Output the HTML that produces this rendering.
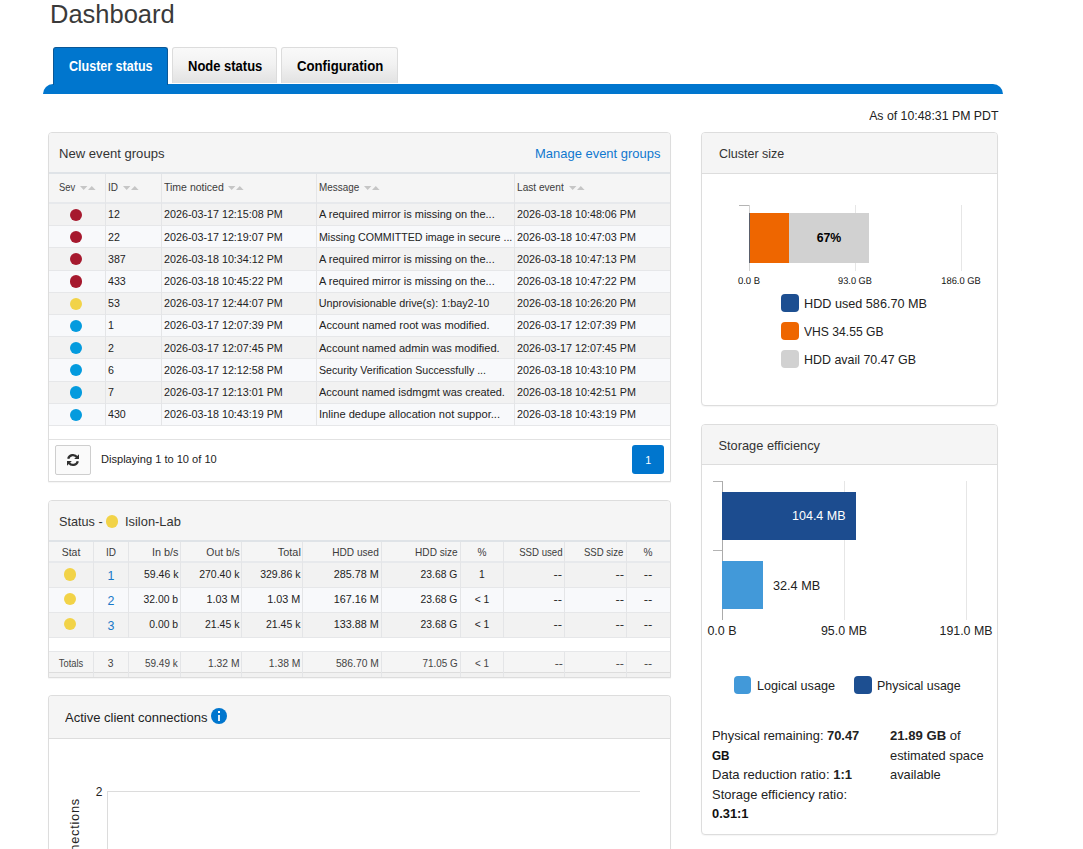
<!DOCTYPE html>
<html><head><meta charset="utf-8"><title>Dashboard</title>
<style>
html,body{margin:0;padding:0;background:#fff}
body{width:1083px;height:849px;overflow:hidden;position:relative;font-family:"Liberation Sans",sans-serif;color:#222}
.t{position:absolute;white-space:nowrap;line-height:1;display:block}
</style></head><body>
<div style="position:absolute;left:43px;top:84px;width:960.00px;height:10.00px;background:#0076ce;border-radius:10px 10px 0 0;"></div>
<div style="position:absolute;left:53px;top:47px;width:115.00px;height:37.50px;background:#0076ce;border-radius:3px 3px 0 0;box-sizing:border-box;border:1px solid #0a5796;border-bottom:none;"></div>
<div style="position:absolute;left:172px;top:47px;width:105px;height:35.7px;box-sizing:border-box;border:1px solid #dcdcdc;border-bottom:none;border-radius:3px 3px 0 0;background:linear-gradient(#f9f9f9,#f2f2f2 45%,#e2e2e2)"></div>
<div style="position:absolute;left:281px;top:47px;width:117px;height:35.7px;box-sizing:border-box;border:1px solid #dcdcdc;border-bottom:none;border-radius:3px 3px 0 0;background:linear-gradient(#f9f9f9,#f2f2f2 45%,#e2e2e2)"></div>
<div style="position:absolute;left:48px;top:132px;width:623px;height:350px;box-sizing:border-box;border:1px solid #dddddd;border-radius:4px 4px 0 0;background:#fff;overflow:hidden;box-shadow:0 1px 1px rgba(0,0,0,0.04)"><div style="height:41px;background:#f5f5f5;border-bottom:1px solid #dfe3e7"></div></div>
<div style="position:absolute;left:49px;top:172px;width:621.00px;height:2.00px;background:#dfe3e7;"></div>
<div style="position:absolute;left:49px;top:174px;width:621.00px;height:28.50px;background:#f5f5f5;"></div>
<div style="position:absolute;left:49px;top:202px;width:621.00px;height:2.00px;background:#e7e9ec;"></div>
<svg style="position:absolute;left:80.1px;top:186.0px" width="17" height="5" viewBox="0 0 17 5"><path d="M0 0 L7.4 0 L3.7 4 Z M8 4 L15.6 4 L11.8 0 Z" fill="#c6c6c6"/></svg>
<svg style="position:absolute;left:123.0px;top:186.0px" width="17" height="5" viewBox="0 0 17 5"><path d="M0 0 L7.4 0 L3.7 4 Z M8 4 L15.6 4 L11.8 0 Z" fill="#c6c6c6"/></svg>
<svg style="position:absolute;left:228.0px;top:186.0px" width="17" height="5" viewBox="0 0 17 5"><path d="M0 0 L7.4 0 L3.7 4 Z M8 4 L15.6 4 L11.8 0 Z" fill="#c6c6c6"/></svg>
<svg style="position:absolute;left:364.0px;top:186.0px" width="17" height="5" viewBox="0 0 17 5"><path d="M0 0 L7.4 0 L3.7 4 Z M8 4 L15.6 4 L11.8 0 Z" fill="#c6c6c6"/></svg>
<svg style="position:absolute;left:568.7px;top:186.0px" width="17" height="5" viewBox="0 0 17 5"><path d="M0 0 L7.4 0 L3.7 4 Z M8 4 L15.6 4 L11.8 0 Z" fill="#c6c6c6"/></svg>
<div style="position:absolute;left:49px;top:204px;width:621.00px;height:222.00px;background:#e6e7e9;"></div>
<div style="position:absolute;left:49px;top:204px;width:621.00px;height:21.00px;background:#f2f2f2;"></div>
<div style="position:absolute;left:69.9px;top:208.8px;width:12.20px;height:12.20px;background:#a6192e;border-radius:50%;"></div>
<div style="position:absolute;left:49px;top:226px;width:621.00px;height:21.00px;background:#f8f9fb;"></div>
<div style="position:absolute;left:69.9px;top:231.0px;width:12.20px;height:12.20px;background:#a6192e;border-radius:50%;"></div>
<div style="position:absolute;left:49px;top:248px;width:621.00px;height:22.00px;background:#f2f2f2;"></div>
<div style="position:absolute;left:69.9px;top:253.20000000000002px;width:12.20px;height:12.20px;background:#a6192e;border-radius:50%;"></div>
<div style="position:absolute;left:49px;top:271px;width:621.00px;height:21.00px;background:#f8f9fb;"></div>
<div style="position:absolute;left:69.9px;top:275.4px;width:12.20px;height:12.20px;background:#a6192e;border-radius:50%;"></div>
<div style="position:absolute;left:49px;top:293px;width:621.00px;height:21.00px;background:#f2f2f2;"></div>
<div style="position:absolute;left:69.9px;top:297.6px;width:12.20px;height:12.20px;background:#f2d348;border-radius:50%;"></div>
<div style="position:absolute;left:49px;top:315px;width:621.00px;height:21.00px;background:#f8f9fb;"></div>
<div style="position:absolute;left:69.9px;top:319.8px;width:12.20px;height:12.20px;background:#049bde;border-radius:50%;"></div>
<div style="position:absolute;left:49px;top:337px;width:621.00px;height:21.00px;background:#f2f2f2;"></div>
<div style="position:absolute;left:69.9px;top:342.0px;width:12.20px;height:12.20px;background:#049bde;border-radius:50%;"></div>
<div style="position:absolute;left:49px;top:359px;width:621.00px;height:22.00px;background:#f8f9fb;"></div>
<div style="position:absolute;left:69.9px;top:364.20000000000005px;width:12.20px;height:12.20px;background:#049bde;border-radius:50%;"></div>
<div style="position:absolute;left:49px;top:382px;width:621.00px;height:21.00px;background:#f2f2f2;"></div>
<div style="position:absolute;left:69.9px;top:386.4px;width:12.20px;height:12.20px;background:#049bde;border-radius:50%;"></div>
<div style="position:absolute;left:49px;top:404px;width:621.00px;height:21.00px;background:#f8f9fb;"></div>
<div style="position:absolute;left:69.9px;top:408.6px;width:12.20px;height:12.20px;background:#049bde;border-radius:50%;"></div>
<div style="position:absolute;left:105px;top:174px;width:1.00px;height:252.00px;background:#e4e5e7;"></div>
<div style="position:absolute;left:161px;top:174px;width:1.00px;height:252.00px;background:#e4e5e7;"></div>
<div style="position:absolute;left:316px;top:174px;width:1.00px;height:252.00px;background:#e4e5e7;"></div>
<div style="position:absolute;left:514px;top:174px;width:1.00px;height:252.00px;background:#e4e5e7;"></div>
<div style="position:absolute;left:49px;top:439px;width:621.00px;height:1.00px;background:#e2e2e2;"></div>
<div style="position:absolute;left:55px;top:445px;width:36px;height:30px;box-sizing:border-box;border:1px solid #cecece;border-radius:2px;background:#fafafa"></div>
<svg style="position:absolute;left:66px;top:452.8px" width="14" height="14" viewBox="0 0 14 14"><g fill="none" stroke="#303030" stroke-width="2.25"><path d="M2.2 5.8 A4.95 4.95 0 0 1 11.05 4.16"/><path d="M11.8 8.2 A4.95 4.95 0 0 1 2.95 9.84"/></g><path d="M13 1.3 L13 6.1 L8.2 6.1 Z" fill="#303030"/><path d="M1 12.7 L1 7.9 L5.8 7.9 Z" fill="#303030"/></svg>
<div style="position:absolute;left:632px;top:445px;width:32.00px;height:29.00px;background:#0076ce;border-radius:3px;"></div>
<div style="position:absolute;left:48px;top:500px;width:623px;height:178px;box-sizing:border-box;border:1px solid #dddddd;border-radius:4px 4px 0 0;background:#fff;overflow:hidden;box-shadow:0 1px 1px rgba(0,0,0,0.04)"><div style="height:41px;background:#f5f5f5;border-bottom:1px solid #dfe3e7"></div></div>
<div style="position:absolute;left:49px;top:540px;width:621.00px;height:2.00px;background:#dfe3e7;"></div>
<div style="position:absolute;left:106.0px;top:515.1999999999999px;width:12.40px;height:12.40px;background:#f2d348;border-radius:50%;"></div>
<div style="position:absolute;left:49px;top:542px;width:621.00px;height:19.00px;background:#f5f5f5;"></div>
<div style="position:absolute;left:49px;top:561px;width:621.00px;height:2.00px;background:#e7e9ec;"></div>
<div style="position:absolute;left:49px;top:563px;width:621.00px;height:75.00px;background:#e6e7e9;"></div>
<div style="position:absolute;left:49px;top:563px;width:621.00px;height:24.00px;background:#f2f2f2;"></div>
<div style="position:absolute;left:63.9px;top:568.4px;width:12.20px;height:12.20px;background:#f2d348;border-radius:50%;"></div>
<div style="position:absolute;left:49px;top:588px;width:621.00px;height:24.00px;background:#f8f9fb;"></div>
<div style="position:absolute;left:63.9px;top:593.1999999999999px;width:12.20px;height:12.20px;background:#f2d348;border-radius:50%;"></div>
<div style="position:absolute;left:49px;top:613px;width:621.00px;height:24.00px;background:#f2f2f2;"></div>
<div style="position:absolute;left:63.9px;top:618.0px;width:12.20px;height:12.20px;background:#f2d348;border-radius:50%;"></div>
<div style="position:absolute;left:49px;top:652px;width:621.00px;height:20.00px;background:#f5f5f5;"></div>
<div style="position:absolute;left:49px;top:651px;width:621.00px;height:1.00px;background:#e6e7e9;"></div>
<div style="position:absolute;left:49px;top:672px;width:621.00px;height:1.00px;background:#dddddd;"></div>
<div style="position:absolute;left:49px;top:673px;width:621.00px;height:4.00px;background:#f1f1f1;"></div>
<div style="position:absolute;left:93px;top:542px;width:1.00px;height:96.00px;background:#e4e5e7;"></div>
<div style="position:absolute;left:93px;top:651.5px;width:1.00px;height:25.50px;background:#e4e5e7;"></div>
<div style="position:absolute;left:128px;top:542px;width:1.00px;height:96.00px;background:#e4e5e7;"></div>
<div style="position:absolute;left:128px;top:651.5px;width:1.00px;height:25.50px;background:#e4e5e7;"></div>
<div style="position:absolute;left:180px;top:542px;width:1.00px;height:96.00px;background:#e4e5e7;"></div>
<div style="position:absolute;left:180px;top:651.5px;width:1.00px;height:25.50px;background:#e4e5e7;"></div>
<div style="position:absolute;left:241px;top:542px;width:1.00px;height:96.00px;background:#e4e5e7;"></div>
<div style="position:absolute;left:241px;top:651.5px;width:1.00px;height:25.50px;background:#e4e5e7;"></div>
<div style="position:absolute;left:302px;top:542px;width:1.00px;height:96.00px;background:#e4e5e7;"></div>
<div style="position:absolute;left:302px;top:651.5px;width:1.00px;height:25.50px;background:#e4e5e7;"></div>
<div style="position:absolute;left:381px;top:542px;width:1.00px;height:96.00px;background:#e4e5e7;"></div>
<div style="position:absolute;left:381px;top:651.5px;width:1.00px;height:25.50px;background:#e4e5e7;"></div>
<div style="position:absolute;left:460px;top:542px;width:1.00px;height:96.00px;background:#e4e5e7;"></div>
<div style="position:absolute;left:460px;top:651.5px;width:1.00px;height:25.50px;background:#e4e5e7;"></div>
<div style="position:absolute;left:503px;top:542px;width:1.00px;height:96.00px;background:#e4e5e7;"></div>
<div style="position:absolute;left:503px;top:651.5px;width:1.00px;height:25.50px;background:#e4e5e7;"></div>
<div style="position:absolute;left:564px;top:542px;width:1.00px;height:96.00px;background:#e4e5e7;"></div>
<div style="position:absolute;left:564px;top:651.5px;width:1.00px;height:25.50px;background:#e4e5e7;"></div>
<div style="position:absolute;left:626px;top:542px;width:1.00px;height:96.00px;background:#e4e5e7;"></div>
<div style="position:absolute;left:626px;top:651.5px;width:1.00px;height:25.50px;background:#e4e5e7;"></div>
<div style="position:absolute;left:48px;top:695px;width:623px;height:165px;box-sizing:border-box;border:1px solid #dddddd;border-bottom:none;border-radius:4px 4px 0 0;background:#fff;overflow:hidden;box-shadow:0 1px 1px rgba(0,0,0,0.04)"><div style="height:42.39999999999998px;background:#f5f5f5;border-bottom:1px solid #dddddd"></div></div>
<div style="position:absolute;left:210.9px;top:707.75px;width:16.20px;height:16.20px;background:#0076ce;border-radius:50%;"></div>
<div style="position:absolute;left:218.0px;top:714.7px;width:2.00px;height:6.30px;background:rgba(255,255,255,0.88);"></div>
<div style="position:absolute;left:217.9px;top:710.9px;width:2.10px;height:2.10px;background:#ffffff;"></div>
<div style="position:absolute;left:107px;top:791px;width:533.00px;height:1.00px;background:#dcdcdc;"></div>
<div style="position:absolute;left:107px;top:791px;width:1.00px;height:58.00px;background:#dcdcdc;"></div>
<span style="position:absolute;right:1013.4px;top:798px;white-space:nowrap;font-size:12.8px;line-height:1;color:#222;transform-origin:100% 0;transform:rotate(-90deg);display:block;letter-spacing:0.75px">Active connections</span>
<div style="position:absolute;left:701px;top:132px;width:297px;height:274px;box-sizing:border-box;border:1px solid #dddddd;border-radius:4px;background:#fff;overflow:hidden;box-shadow:0 1px 1px rgba(0,0,0,0.04)"><div style="height:39.599999999999994px;background:#f5f5f5;border-bottom:1px solid #dddddd"></div></div>
<div style="position:absolute;left:855px;top:205px;width:1.00px;height:66.00px;background:#e6e6e6;"></div>
<div style="position:absolute;left:961px;top:205px;width:1.00px;height:66.00px;background:#e6e6e6;"></div>
<div style="position:absolute;left:739.3px;top:204.5px;width:10.20px;height:1.00px;background:#b4b4b4;"></div>
<div style="position:absolute;left:748.8px;top:205px;width:1.00px;height:66.00px;background:#d2d2d2;"></div>
<div style="position:absolute;left:748.8px;top:213.3px;width:1.00px;height:49.50px;background:#5a5f6b;"></div>
<div style="position:absolute;left:749.6px;top:213.3px;width:39.40px;height:49.50px;background:#ee6600;"></div>
<div style="position:absolute;left:789px;top:213.3px;width:80.20px;height:49.50px;background:#d1d1d1;"></div>
<div style="position:absolute;left:781.0px;top:294px;width:18.40px;height:18.20px;background:#1d4f91;border-radius:4px;"></div>
<div style="position:absolute;left:781.0px;top:322px;width:18.40px;height:18.20px;background:#ee6600;border-radius:4px;"></div>
<div style="position:absolute;left:781.0px;top:350px;width:18.40px;height:18.20px;background:#d1d1d1;border-radius:4px;"></div>
<div style="position:absolute;left:701px;top:424px;width:297px;height:411px;box-sizing:border-box;border:1px solid #dddddd;border-radius:4px;background:#fff;overflow:hidden;box-shadow:0 1px 1px rgba(0,0,0,0.04)"><div style="height:39px;background:#f5f5f5;border-bottom:1px solid #dddddd"></div></div>
<div style="position:absolute;left:844px;top:481px;width:1.00px;height:139.00px;background:#e6e6e6;"></div>
<div style="position:absolute;left:966px;top:481px;width:1.00px;height:139.00px;background:#e6e6e6;"></div>
<div style="position:absolute;left:712.6px;top:480.5px;width:9.90px;height:1.00px;background:#b4b4b4;"></div>
<div style="position:absolute;left:712.6px;top:549.5px;width:9.90px;height:1.00px;background:#b4b4b4;"></div>
<div style="position:absolute;left:722px;top:481px;width:1.00px;height:139.00px;background:#ababab;"></div>
<div style="position:absolute;left:722px;top:491.6px;width:133.80px;height:48.20px;background:#1c4c8f;"></div>
<div style="position:absolute;left:722px;top:561px;width:41.30px;height:48.20px;background:#4299d9;"></div>
<div style="position:absolute;left:733.5px;top:676.2px;width:17.70px;height:17.60px;background:#4299d9;border-radius:4px;"></div>
<div style="position:absolute;left:854.2px;top:676.2px;width:17.80px;height:17.60px;background:#1d4f91;border-radius:4px;"></div>
<span class="t" style="top:1.20px;font-size:26.2px;color:#3a3a3a;left:50.00px;transform-origin:0 0;transform:scaleX(0.9733);">Dashboard</span>
<span class="t" style="top:60.10px;font-size:13.9px;color:#ffffff;font-weight:700;left:69.00px;transform-origin:0 0;transform:scaleX(0.9013);">Cluster status</span>
<span class="t" style="top:60.10px;font-size:13.9px;color:#000000;font-weight:700;left:187.50px;transform-origin:0 0;transform:scaleX(0.9346);">Node status</span>
<span class="t" style="top:60.10px;font-size:13.9px;color:#000000;font-weight:700;left:296.50px;transform-origin:0 0;transform:scaleX(0.9479);">Configuration</span>
<span class="t" style="top:110.00px;font-size:12.8px;color:#222222;right:84.70px;transform-origin:100% 0;transform:scaleX(0.9618);">As of 10:48:31 PM PDT</span>
<span class="t" style="top:148.00px;font-size:12.8px;color:#333333;left:59.00px;transform-origin:0 0;transform:scaleX(1.0227);">New event groups</span>
<span class="t" style="top:148.00px;font-size:12.8px;color:#0f78cf;left:534.50px;transform-origin:0 0;transform:scaleX(1.0129);">Manage event groups</span>
<span class="t" style="top:181.80px;font-size:10.8px;color:#3c3c3c;left:59.00px;transform-origin:0 0;transform:scaleX(0.8705);">Sev</span>
<span class="t" style="top:181.80px;font-size:10.8px;color:#3c3c3c;left:107.50px;transform-origin:0 0;transform:scaleX(0.9249);">ID</span>
<span class="t" style="top:181.80px;font-size:10.8px;color:#3c3c3c;left:163.50px;transform-origin:0 0;transform:scaleX(0.9736);">Time noticed</span>
<span class="t" style="top:181.80px;font-size:10.8px;color:#3c3c3c;left:318.80px;transform-origin:0 0;transform:scaleX(0.9175);">Message</span>
<span class="t" style="top:181.80px;font-size:10.8px;color:#3c3c3c;left:517.00px;transform-origin:0 0;transform:scaleX(0.9372);">Last event</span>
<span class="t" style="top:209.00px;font-size:10.8px;color:#222222;left:108.00px;transform-origin:0 0;transform:scaleX(0.9850);">12</span>
<span class="t" style="top:209.00px;font-size:10.8px;color:#222222;left:163.50px;transform-origin:0 0;transform:scaleX(0.9945);">2026-03-17 12:15:08 PM</span>
<span class="t" style="top:209.00px;font-size:10.8px;color:#222222;left:318.80px;transform-origin:0 0;transform:scaleX(1.0166);">A required mirror is missing on the...</span>
<span class="t" style="top:209.00px;font-size:10.8px;color:#222222;left:517.00px;transform-origin:0 0;transform:scaleX(0.9954);">2026-03-18 10:48:06 PM</span>
<span class="t" style="top:232.00px;font-size:10.8px;color:#222222;left:108.00px;transform-origin:0 0;transform:scaleX(0.9850);">22</span>
<span class="t" style="top:232.00px;font-size:10.8px;color:#222222;left:163.50px;transform-origin:0 0;transform:scaleX(0.9945);">2026-03-17 12:19:07 PM</span>
<span class="t" style="top:232.00px;font-size:10.8px;color:#222222;left:318.80px;transform-origin:0 0;transform:scaleX(0.9853);">Missing COMMITTED image in secure ...</span>
<span class="t" style="top:232.00px;font-size:10.8px;color:#222222;left:517.00px;transform-origin:0 0;transform:scaleX(0.9954);">2026-03-18 10:47:03 PM</span>
<span class="t" style="top:254.00px;font-size:10.8px;color:#222222;left:108.00px;transform-origin:0 0;transform:scaleX(0.9850);">387</span>
<span class="t" style="top:254.00px;font-size:10.8px;color:#222222;left:163.50px;transform-origin:0 0;transform:scaleX(0.9945);">2026-03-18 10:34:12 PM</span>
<span class="t" style="top:254.00px;font-size:10.8px;color:#222222;left:318.80px;transform-origin:0 0;transform:scaleX(1.0166);">A required mirror is missing on the...</span>
<span class="t" style="top:254.00px;font-size:10.8px;color:#222222;left:517.00px;transform-origin:0 0;transform:scaleX(0.9954);">2026-03-18 10:47:13 PM</span>
<span class="t" style="top:276.00px;font-size:10.8px;color:#222222;left:108.00px;transform-origin:0 0;transform:scaleX(0.9850);">433</span>
<span class="t" style="top:276.00px;font-size:10.8px;color:#222222;left:163.50px;transform-origin:0 0;transform:scaleX(0.9945);">2026-03-18 10:45:22 PM</span>
<span class="t" style="top:276.00px;font-size:10.8px;color:#222222;left:318.80px;transform-origin:0 0;transform:scaleX(1.0166);">A required mirror is missing on the...</span>
<span class="t" style="top:276.00px;font-size:10.8px;color:#222222;left:517.00px;transform-origin:0 0;transform:scaleX(0.9954);">2026-03-18 10:47:22 PM</span>
<span class="t" style="top:298.00px;font-size:10.8px;color:#222222;left:108.00px;transform-origin:0 0;transform:scaleX(0.9850);">53</span>
<span class="t" style="top:298.00px;font-size:10.8px;color:#222222;left:163.50px;transform-origin:0 0;transform:scaleX(0.9945);">2026-03-17 12:44:07 PM</span>
<span class="t" style="top:298.00px;font-size:10.8px;color:#222222;left:318.80px;transform-origin:0 0;">Unprovisionable drive(s): 1:bay2-10</span>
<span class="t" style="top:298.00px;font-size:10.8px;color:#222222;left:517.00px;transform-origin:0 0;transform:scaleX(0.9954);">2026-03-18 10:26:20 PM</span>
<span class="t" style="top:320.00px;font-size:10.8px;color:#222222;left:108.00px;transform-origin:0 0;transform:scaleX(0.9850);">1</span>
<span class="t" style="top:320.00px;font-size:10.8px;color:#222222;left:163.50px;transform-origin:0 0;transform:scaleX(0.9945);">2026-03-17 12:07:39 PM</span>
<span class="t" style="top:320.00px;font-size:10.8px;color:#222222;left:318.80px;transform-origin:0 0;transform:scaleX(1.0293);">Account named root was modified.</span>
<span class="t" style="top:320.00px;font-size:10.8px;color:#222222;left:517.00px;transform-origin:0 0;transform:scaleX(0.9954);">2026-03-17 12:07:39 PM</span>
<span class="t" style="top:343.00px;font-size:10.8px;color:#222222;left:108.00px;transform-origin:0 0;transform:scaleX(0.9850);">2</span>
<span class="t" style="top:343.00px;font-size:10.8px;color:#222222;left:163.50px;transform-origin:0 0;transform:scaleX(0.9945);">2026-03-17 12:07:45 PM</span>
<span class="t" style="top:343.00px;font-size:10.8px;color:#222222;left:318.80px;transform-origin:0 0;transform:scaleX(1.0241);">Account named admin was modified.</span>
<span class="t" style="top:343.00px;font-size:10.8px;color:#222222;left:517.00px;transform-origin:0 0;transform:scaleX(0.9954);">2026-03-17 12:07:45 PM</span>
<span class="t" style="top:365.00px;font-size:10.8px;color:#222222;left:108.00px;transform-origin:0 0;transform:scaleX(0.9850);">6</span>
<span class="t" style="top:365.00px;font-size:10.8px;color:#222222;left:163.50px;transform-origin:0 0;transform:scaleX(0.9945);">2026-03-17 12:12:58 PM</span>
<span class="t" style="top:365.00px;font-size:10.8px;color:#222222;left:318.80px;transform-origin:0 0;transform:scaleX(0.9833);">Security Verification Successfully ...</span>
<span class="t" style="top:365.00px;font-size:10.8px;color:#222222;left:517.00px;transform-origin:0 0;transform:scaleX(0.9954);">2026-03-18 10:43:10 PM</span>
<span class="t" style="top:387.00px;font-size:10.8px;color:#222222;left:108.00px;transform-origin:0 0;transform:scaleX(0.9850);">7</span>
<span class="t" style="top:387.00px;font-size:10.8px;color:#222222;left:163.50px;transform-origin:0 0;transform:scaleX(0.9945);">2026-03-17 12:13:01 PM</span>
<span class="t" style="top:387.00px;font-size:10.8px;color:#222222;left:318.80px;transform-origin:0 0;transform:scaleX(1.0157);">Account named isdmgmt was created.</span>
<span class="t" style="top:387.00px;font-size:10.8px;color:#222222;left:517.00px;transform-origin:0 0;transform:scaleX(0.9954);">2026-03-18 10:42:51 PM</span>
<span class="t" style="top:409.00px;font-size:10.8px;color:#222222;left:108.00px;transform-origin:0 0;transform:scaleX(0.9850);">430</span>
<span class="t" style="top:409.00px;font-size:10.8px;color:#222222;left:163.50px;transform-origin:0 0;transform:scaleX(0.9945);">2026-03-18 10:43:19 PM</span>
<span class="t" style="top:409.00px;font-size:10.8px;color:#222222;left:318.80px;transform-origin:0 0;transform:scaleX(1.0290);">Inline dedupe allocation not suppor...</span>
<span class="t" style="top:409.00px;font-size:10.8px;color:#222222;left:517.00px;transform-origin:0 0;transform:scaleX(0.9954);">2026-03-18 10:43:19 PM</span>
<span class="t" style="top:453.90px;font-size:10.8px;color:#222222;left:101.00px;transform-origin:0 0;transform:scaleX(1.0253);">Displaying 1 to 10 of 10</span>
<span class="t" style="top:455.00px;font-size:10.8px;color:#ffffff;left:148.30px;width:1000px;text-align:center;transform-origin:50% 0;">1</span>
<span class="t" style="top:515.60px;font-size:12.8px;color:#333333;left:59.00px;transform-origin:0 0;transform:scaleX(0.9885);">Status -</span>
<span class="t" style="top:515.60px;font-size:12.8px;color:#333333;left:125.00px;transform-origin:0 0;transform:scaleX(1.0054);">Isilon-Lab</span>
<span class="t" style="top:546.60px;font-size:10.8px;color:#3c3c3c;left:-428.70px;width:1000px;text-align:center;transform-origin:50% 0;transform:scaleX(0.9678);">Stat</span>
<span class="t" style="top:546.60px;font-size:10.8px;color:#3c3c3c;left:-389.20px;width:1000px;text-align:center;transform-origin:50% 0;transform:scaleX(0.9249);">ID</span>
<span class="t" style="top:546.60px;font-size:10.8px;color:#3c3c3c;right:905.00px;transform-origin:100% 0;transform:scaleX(1.0030);">In b/s</span>
<span class="t" style="top:546.60px;font-size:10.8px;color:#3c3c3c;right:843.50px;transform-origin:100% 0;transform:scaleX(0.9623);">Out b/s</span>
<span class="t" style="top:546.60px;font-size:10.8px;color:#3c3c3c;right:782.70px;transform-origin:100% 0;transform:scaleX(1.0082);">Total</span>
<span class="t" style="top:546.60px;font-size:10.8px;color:#3c3c3c;right:704.20px;transform-origin:100% 0;transform:scaleX(0.9335);">HDD used</span>
<span class="t" style="top:546.60px;font-size:10.8px;color:#3c3c3c;right:625.50px;transform-origin:100% 0;transform:scaleX(0.9321);">HDD size</span>
<span class="t" style="top:546.60px;font-size:10.8px;color:#3c3c3c;left:-18.00px;width:1000px;text-align:center;transform-origin:50% 0;transform:scaleX(0.9366);">%</span>
<span class="t" style="top:546.60px;font-size:10.8px;color:#3c3c3c;right:520.50px;transform-origin:100% 0;transform:scaleX(0.8946);">SSD used</span>
<span class="t" style="top:546.60px;font-size:10.8px;color:#3c3c3c;right:459.30px;transform-origin:100% 0;transform:scaleX(0.8895);">SSD size</span>
<span class="t" style="top:546.60px;font-size:10.8px;color:#3c3c3c;left:148.00px;width:1000px;text-align:center;transform-origin:50% 0;transform:scaleX(0.9366);">%</span>
<span class="t" style="top:570.00px;font-size:12.8px;color:#1878c8;left:-389.40px;width:1000px;text-align:center;transform-origin:50% 0;transform:scaleX(0.9700);">1</span>
<span class="t" style="top:569.00px;font-size:10.8px;color:#222222;right:905.00px;transform-origin:100% 0;transform:scaleX(0.9720);">59.46 k</span>
<span class="t" style="top:569.00px;font-size:10.8px;color:#222222;right:843.50px;transform-origin:100% 0;transform:scaleX(0.9720);">270.40 k</span>
<span class="t" style="top:569.00px;font-size:10.8px;color:#222222;right:782.70px;transform-origin:100% 0;transform:scaleX(0.9720);">329.86 k</span>
<span class="t" style="top:569.00px;font-size:10.8px;color:#222222;right:704.20px;transform-origin:100% 0;">285.78 M</span>
<span class="t" style="top:569.00px;font-size:10.8px;color:#222222;right:625.50px;transform-origin:100% 0;transform:scaleX(0.9580);">23.68 G</span>
<span class="t" style="top:569.00px;font-size:10.8px;color:#222222;left:-18.00px;width:1000px;text-align:center;transform-origin:50% 0;transform:scaleX(0.9580);">1</span>
<span class="t" style="top:569.00px;font-size:10.8px;color:#222222;right:520.50px;transform-origin:100% 0;transform:scaleX(1.2000);">--</span>
<span class="t" style="top:569.00px;font-size:10.8px;color:#222222;right:459.30px;transform-origin:100% 0;transform:scaleX(1.2000);">--</span>
<span class="t" style="top:569.00px;font-size:10.8px;color:#222222;left:148.00px;width:1000px;text-align:center;transform-origin:50% 0;transform:scaleX(1.2000);">--</span>
<span class="t" style="top:595.00px;font-size:12.8px;color:#1878c8;left:-389.40px;width:1000px;text-align:center;transform-origin:50% 0;transform:scaleX(0.9700);">2</span>
<span class="t" style="top:594.00px;font-size:10.8px;color:#222222;right:905.00px;transform-origin:100% 0;transform:scaleX(0.9580);">32.00 b</span>
<span class="t" style="top:594.00px;font-size:10.8px;color:#222222;right:843.50px;transform-origin:100% 0;">1.03 M</span>
<span class="t" style="top:594.00px;font-size:10.8px;color:#222222;right:782.70px;transform-origin:100% 0;">1.03 M</span>
<span class="t" style="top:594.00px;font-size:10.8px;color:#222222;right:704.20px;transform-origin:100% 0;">167.16 M</span>
<span class="t" style="top:594.00px;font-size:10.8px;color:#222222;right:625.50px;transform-origin:100% 0;transform:scaleX(0.9580);">23.68 G</span>
<span class="t" style="top:594.00px;font-size:10.8px;color:#222222;left:-18.00px;width:1000px;text-align:center;transform-origin:50% 0;transform:scaleX(0.9580);">&lt; 1</span>
<span class="t" style="top:594.00px;font-size:10.8px;color:#222222;right:520.50px;transform-origin:100% 0;transform:scaleX(1.2000);">--</span>
<span class="t" style="top:594.00px;font-size:10.8px;color:#222222;right:459.30px;transform-origin:100% 0;transform:scaleX(1.2000);">--</span>
<span class="t" style="top:594.00px;font-size:10.8px;color:#222222;left:148.00px;width:1000px;text-align:center;transform-origin:50% 0;transform:scaleX(1.2000);">--</span>
<span class="t" style="top:620.00px;font-size:12.8px;color:#1878c8;left:-389.40px;width:1000px;text-align:center;transform-origin:50% 0;transform:scaleX(0.9700);">3</span>
<span class="t" style="top:619.00px;font-size:10.8px;color:#222222;right:905.00px;transform-origin:100% 0;transform:scaleX(0.9580);">0.00 b</span>
<span class="t" style="top:619.00px;font-size:10.8px;color:#222222;right:843.50px;transform-origin:100% 0;transform:scaleX(0.9720);">21.45 k</span>
<span class="t" style="top:619.00px;font-size:10.8px;color:#222222;right:782.70px;transform-origin:100% 0;transform:scaleX(0.9720);">21.45 k</span>
<span class="t" style="top:619.00px;font-size:10.8px;color:#222222;right:704.20px;transform-origin:100% 0;">133.88 M</span>
<span class="t" style="top:619.00px;font-size:10.8px;color:#222222;right:625.50px;transform-origin:100% 0;transform:scaleX(0.9580);">23.68 G</span>
<span class="t" style="top:619.00px;font-size:10.8px;color:#222222;left:-18.00px;width:1000px;text-align:center;transform-origin:50% 0;transform:scaleX(0.9580);">&lt; 1</span>
<span class="t" style="top:619.00px;font-size:10.8px;color:#222222;right:520.50px;transform-origin:100% 0;transform:scaleX(1.2000);">--</span>
<span class="t" style="top:619.00px;font-size:10.8px;color:#222222;right:459.30px;transform-origin:100% 0;transform:scaleX(1.2000);">--</span>
<span class="t" style="top:619.00px;font-size:10.8px;color:#222222;left:148.00px;width:1000px;text-align:center;transform-origin:50% 0;transform:scaleX(1.2000);">--</span>
<span class="t" style="top:659.00px;font-size:10.3px;color:#444444;left:-428.70px;width:1000px;text-align:center;transform-origin:50% 0;transform:scaleX(0.9106);">Totals</span>
<span class="t" style="top:659.00px;font-size:10.3px;color:#444444;left:-389.40px;width:1000px;text-align:center;transform-origin:50% 0;">3</span>
<span class="t" style="top:659.00px;font-size:10.3px;color:#444444;right:905.00px;transform-origin:100% 0;transform:scaleX(0.9720);">59.49 k</span>
<span class="t" style="top:659.00px;font-size:10.3px;color:#444444;right:843.50px;transform-origin:100% 0;">1.32 M</span>
<span class="t" style="top:659.00px;font-size:10.3px;color:#444444;right:782.70px;transform-origin:100% 0;">1.38 M</span>
<span class="t" style="top:659.00px;font-size:10.3px;color:#444444;right:704.20px;transform-origin:100% 0;">586.70 M</span>
<span class="t" style="top:659.00px;font-size:10.3px;color:#444444;right:625.50px;transform-origin:100% 0;transform:scaleX(0.9580);">71.05 G</span>
<span class="t" style="top:659.00px;font-size:10.3px;color:#444444;left:-18.00px;width:1000px;text-align:center;transform-origin:50% 0;transform:scaleX(0.9580);">&lt; 1</span>
<span class="t" style="top:659.00px;font-size:10.3px;color:#444444;right:520.50px;transform-origin:100% 0;transform:scaleX(1.2000);">--</span>
<span class="t" style="top:659.00px;font-size:10.3px;color:#444444;right:459.30px;transform-origin:100% 0;transform:scaleX(1.2000);">--</span>
<span class="t" style="top:659.00px;font-size:10.3px;color:#444444;left:148.00px;width:1000px;text-align:center;transform-origin:50% 0;transform:scaleX(1.2000);">--</span>
<span class="t" style="top:711.60px;font-size:12.8px;color:#222222;left:65.40px;transform-origin:0 0;transform:scaleX(1.0168);">Active client connections</span>
<span class="t" style="top:786.00px;font-size:12.0px;color:#222222;left:-401.00px;width:1000px;text-align:center;transform-origin:50% 0;">2</span>
<span class="t" style="top:148.00px;font-size:12.8px;color:#333333;left:718.50px;transform-origin:0 0;transform:scaleX(0.9767);">Cluster size</span>
<span class="t" style="top:231.00px;font-size:13.0px;color:#000000;font-weight:700;left:329.00px;width:1000px;text-align:center;transform-origin:50% 0;transform:scaleX(0.9450);">67%</span>
<span class="t" style="top:277.00px;font-size:9.8px;color:#111;left:249.00px;width:1000px;text-align:center;transform-origin:50% 0;transform:scaleX(0.9698);text-rendering:geometricPrecision;">0.0 B</span>
<span class="t" style="top:277.00px;font-size:9.8px;color:#111;left:355.00px;width:1000px;text-align:center;transform-origin:50% 0;transform:scaleX(0.9401);text-rendering:geometricPrecision;">93.0 GB</span>
<span class="t" style="top:277.00px;font-size:9.8px;color:#111;left:461.30px;width:1000px;text-align:center;transform-origin:50% 0;transform:scaleX(0.9540);text-rendering:geometricPrecision;">186.0 GB</span>
<span class="t" style="top:298.00px;font-size:12.8px;color:#222222;left:803.50px;transform-origin:0 0;transform:scaleX(0.9881);">HDD used 586.70 MB</span>
<span class="t" style="top:326.00px;font-size:12.8px;color:#222222;left:803.50px;transform-origin:0 0;transform:scaleX(0.9471);">VHS 34.55 GB</span>
<span class="t" style="top:354.00px;font-size:12.8px;color:#222222;left:803.50px;transform-origin:0 0;transform:scaleX(0.9719);">HDD avail 70.47 GB</span>
<span class="t" style="top:439.60px;font-size:12.8px;color:#333333;left:718.50px;transform-origin:0 0;">Storage efficiency</span>
<span class="t" style="top:509.90px;font-size:12.8px;color:#ffffff;left:792.30px;transform-origin:0 0;transform:scaleX(0.9784);">104.4 MB</span>
<span class="t" style="top:579.90px;font-size:12.8px;color:#222222;left:773.00px;transform-origin:0 0;transform:scaleX(0.9901);">32.4 MB</span>
<span class="t" style="top:625.00px;font-size:12.8px;color:#222222;left:221.80px;width:1000px;text-align:center;transform-origin:50% 0;transform:scaleX(0.9769);">0.0 B</span>
<span class="t" style="top:625.00px;font-size:12.8px;color:#222222;left:344.00px;width:1000px;text-align:center;transform-origin:50% 0;transform:scaleX(0.9691);">95.0 MB</span>
<span class="t" style="top:625.00px;font-size:12.8px;color:#222222;left:466.00px;width:1000px;text-align:center;transform-origin:50% 0;transform:scaleX(0.9675);">191.0 MB</span>
<span class="t" style="top:679.60px;font-size:12.8px;color:#222222;left:756.60px;transform-origin:0 0;transform:scaleX(0.9875);">Logical usage</span>
<span class="t" style="top:679.60px;font-size:12.8px;color:#222222;left:876.70px;transform-origin:0 0;transform:scaleX(0.9724);">Physical usage</span>
<span class="t" style="top:729.80px;font-size:12.8px;color:#222222;left:712.00px;transform-origin:0 0;transform:scaleX(1.0045);">Physical remaining: <b>70.47</b></span>
<span class="t" style="top:749.50px;font-size:12.8px;color:#111;font-weight:700;left:712.00px;transform-origin:0 0;transform:scaleX(0.9165);">GB</span>
<span class="t" style="top:769.00px;font-size:12.8px;color:#222222;left:712.00px;transform-origin:0 0;transform:scaleX(1.0197);">Data reduction ratio: <b>1:1</b></span>
<span class="t" style="top:788.90px;font-size:12.8px;color:#222222;left:712.00px;transform-origin:0 0;transform:scaleX(1.0112);">Storage efficiency ratio:</span>
<span class="t" style="top:807.80px;font-size:12.8px;color:#111;font-weight:700;left:712.00px;transform-origin:0 0;transform:scaleX(1.0056);">0.31:1</span>
<span class="t" style="top:729.80px;font-size:12.8px;color:#222222;left:890.20px;transform-origin:0 0;transform:scaleX(1.0244);"><b>21.89 GB</b> of</span>
<span class="t" style="top:749.50px;font-size:12.8px;color:#222222;left:890.20px;transform-origin:0 0;transform:scaleX(1.0044);">estimated space</span>
<span class="t" style="top:769.00px;font-size:12.8px;color:#222222;left:890.20px;transform-origin:0 0;transform:scaleX(1.0036);">available</span>
</body></html>
